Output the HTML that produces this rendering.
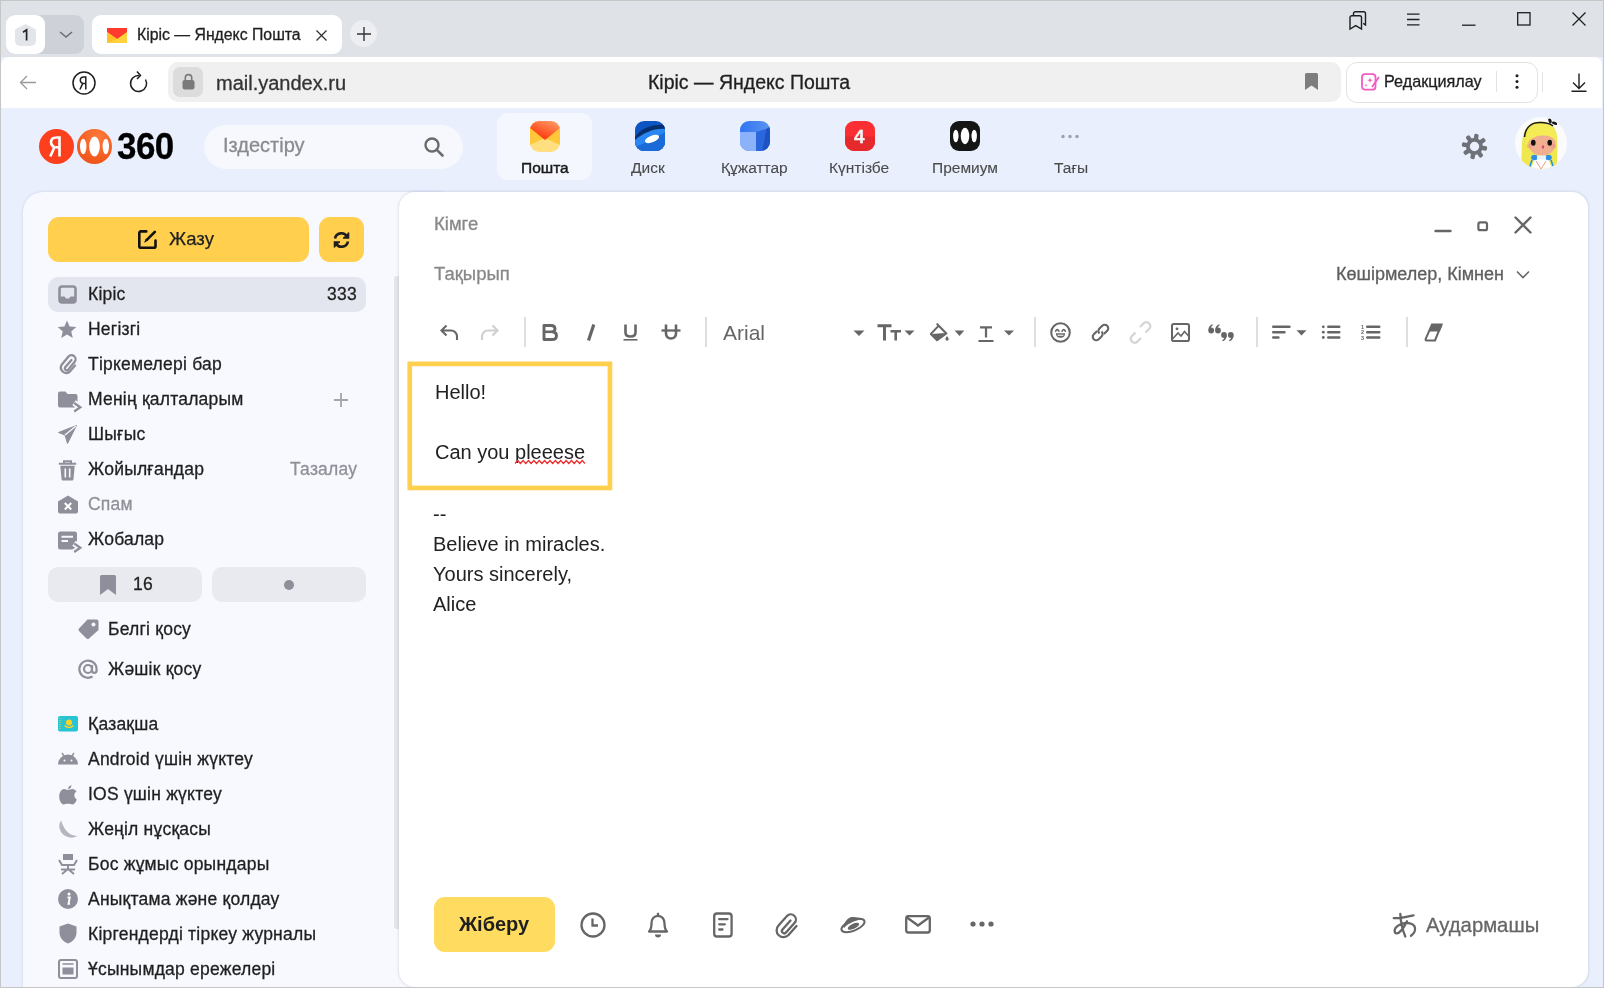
<!DOCTYPE html>
<html><head><meta charset="utf-8">
<style>
*{box-sizing:border-box;margin:0;padding:0}
html,body{width:1604px;height:988px;overflow:hidden;background:#e9effd;font-family:"Liberation Sans",sans-serif;color:#1f1f1f}
.a{position:absolute}
.t{position:absolute;white-space:pre;line-height:1;-webkit-text-stroke-width:0.3px}
svg{position:absolute;overflow:visible}
</style></head><body><div style="position:absolute;left:0;top:0;width:1604px;height:988px;will-change:transform">
<!-- browser chrome -->
<div class="a" style="left:0;top:0;width:1604px;height:57px;background:#dfe2e7"></div>
<div class="a" style="left:6px;top:15px;width:78px;height:39px;background:#ced2d8;border-radius:9px"></div>
<div class="a" style="left:6px;top:15px;width:39px;height:39px;background:#fff;border-radius:9px"></div>
<div class="a" style="left:15px;top:24px;width:21px;height:22px;background:#e2e5ea;border-radius:5px;clip-path:polygon(50% 0,100% 25%,100% 100%,0 100%,0 25%)"></div>
<svg style="left:22px;top:29px" width="8" height="12"><path d="M1 3.3L4.6 0.9V11.5" fill="none" stroke="#222" stroke-width="1.7"/></svg>
<svg style="left:59px;top:31px" width="14" height="8"><path d="M1 1L7 6L13 1" fill="none" stroke="#6b6f75" stroke-width="1.6"/></svg>
<div class="a" style="left:92px;top:15px;width:250px;height:39px;background:#fff;border-radius:9px"></div>
<svg style="left:107px;top:28px" width="20" height="15" viewBox="0 0 20 15"><rect x="0" y="0" width="20" height="15" fill="#ffd23d"/><path d="M0 0H20V4L10 11L0 4Z" fill="#ff3b30"/><path d="M0 4L10 11L0 15Z" fill="#ffc02a"/></svg>
<div class="t" style="left:137px;top:27px;font-size:15.8px;color:#1f1f1f">Кіріс — Яндекс Пошта</div>
<svg style="left:316px;top:30px" width="11" height="11"><path d="M0.5 0.5L10.5 10.5M10.5 0.5L0.5 10.5" stroke="#333" stroke-width="1.3"/></svg>
<div class="a" style="left:350px;top:20px;width:27px;height:27px;background:#eceef2;border-radius:50%"></div>
<svg style="left:357px;top:27px" width="14" height="14"><path d="M7 0V14M0 7H14" stroke="#333" stroke-width="1.4"/></svg>
<!-- window controls -->
<svg style="left:1349px;top:11px" width="18" height="19" viewBox="0 0 18 19"><path d="M4.5 5V2.5a1.8 1.8 0 0 1 1.8-1.8h8.4a1.8 1.8 0 0 1 1.8 1.8V14l-2.3-1.6" fill="none" stroke="#1f1f1f" stroke-width="1.4"/><path d="M1 6.5a1.8 1.8 0 0 1 1.8-1.8h7.9a1.8 1.8 0 0 1 1.8 1.8V18L6.7 14.6L1 18Z" fill="none" stroke="#1f1f1f" stroke-width="1.4"/></svg>
<svg style="left:1407px;top:13px" width="13" height="13"><path d="M0 1.2H12.5M0 6.5H12.5M0 11.8H12.5" stroke="#1f1f1f" stroke-width="1.3"/></svg>
<svg style="left:1462px;top:24px" width="14" height="3"><path d="M0 1.2H13.5" stroke="#1f1f1f" stroke-width="1.3"/></svg>
<svg style="left:1517px;top:12px" width="14" height="14"><rect x="0.7" y="0.7" width="12.3" height="12.3" fill="none" stroke="#1f1f1f" stroke-width="1.3"/></svg>
<svg style="left:1572px;top:12px" width="14" height="14"><path d="M0.5 0.5L13.5 13.5M13.5 0.5L0.5 13.5" stroke="#1f1f1f" stroke-width="1.3"/></svg>
<!-- toolbar -->
<div class="a" style="left:1px;top:57px;width:1601px;height:51px;background:#fff;border-radius:8px 8px 0 0"></div>
<svg style="left:19px;top:75px" width="18" height="15"><path d="M17 7.5H1.5M8 1L1.5 7.5L8 14" fill="none" stroke="#9a9a9a" stroke-width="1.3"/></svg>
<svg style="left:72px;top:71px" width="24" height="24" viewBox="0 0 24 24"><circle cx="12" cy="12" r="11" fill="none" stroke="#1f1f1f" stroke-width="1.5"/><path d="M13.8 18.5V6H11.8C9.6 6 8.3 7.3 8.3 9.2C8.3 10.8 9.2 11.8 10.8 12.4L7.9 18.5M13.8 12.4H11.4" fill="none" stroke="#1f1f1f" stroke-width="1.5"/></svg>
<svg style="left:129px;top:70px" width="20" height="24" viewBox="0 0 20 24"><path d="M16.5 9.5A8 8 0 1 1 10 5.5" fill="none" stroke="#1f1f1f" stroke-width="1.5"/><path d="M8 1.5L11.5 5.5L8 9" fill="none" stroke="#1f1f1f" stroke-width="1.5"/></svg>
<div class="a" style="left:168px;top:62px;width:1173px;height:40px;background:#f0f0f0;border-radius:10px"></div>
<div class="a" style="left:173px;top:67px;width:30px;height:30px;background:#dcdcdc;border-radius:7px"></div>
<svg style="left:182px;top:73px" width="13" height="17" viewBox="0 0 13 17"><path d="M3.3 7.5V4.8a3.2 3.2 0 0 1 6.4 0V7.5" fill="none" stroke="#7a7a7a" stroke-width="1.6"/><rect x="0.5" y="7" width="12" height="9.5" rx="2.2" fill="#7a7a7a"/></svg>
<div class="t" style="left:216px;top:73px;font-size:20px;color:#333">mail.yandex.ru</div>
<div class="t" style="left:648px;top:73px;font-size:19.5px;color:#1f1f1f">Кіріс — Яндекс Пошта</div>
<svg style="left:1305px;top:73px" width="13" height="17"><path d="M0 1.5A1.5 1.5 0 0 1 1.5 0H11.5A1.5 1.5 0 0 1 13 1.5V17L6.5 12.5L0 17Z" fill="#7d7d7d"/></svg>
<div class="a" style="left:1346px;top:62px;width:192px;height:41px;background:#fff;border:1px solid #e3e3e3;border-radius:11px"></div>
<svg style="left:1361px;top:73px" width="19" height="18" viewBox="0 0 19 18"><rect x="1" y="1.2" width="13.5" height="15.5" rx="3" fill="none" stroke="#f05cc0" stroke-width="1.8"/><path d="M9 4.5L9.7 6.6L11.8 7.3L9.7 8L9 10.1L8.3 8L6.2 7.3L8.3 6.6Z M5 10.5L5.4 11.8L6.7 12.2L5.4 12.6L5 13.9L4.6 12.6L3.3 12.2L4.6 11.8Z" fill="#f05cc0"/><path d="M11 14L18 4" stroke="#f05cc0" stroke-width="1.8"/></svg>
<div class="t" style="left:1384px;top:73px;font-size:16.2px;color:#1f1f1f">Редакциялау</div>
<div class="a" style="left:1496px;top:71px;width:1px;height:21px;background:#e3e3e3"></div>
<svg style="left:1515px;top:74px" width="4" height="15"><circle cx="2" cy="1.7" r="1.5" fill="#1f1f1f"/><circle cx="2" cy="7.5" r="1.5" fill="#1f1f1f"/><circle cx="2" cy="13.3" r="1.5" fill="#1f1f1f"/></svg>
<div class="a" style="left:1542px;top:72px;width:1px;height:20px;background:#e3e3e3"></div>
<svg style="left:1571px;top:73px" width="16" height="19"><path d="M8 0.5V15.5M2 9.5L8 15.5L14 9.5M0.5 18.3H15.5" fill="none" stroke="#1f1f1f" stroke-width="1.4"/></svg>
<!-- yandex header -->
<div class="a" style="left:39px;top:129px;width:35px;height:35px;border-radius:50%;background:#fc3f1d"></div>
<svg style="left:48px;top:136px" width="16" height="21" viewBox="0 0 16 21"><path d="M11.5 20.5V1.5H8.3C4.8 1.5 3 3.4 3 6.3C3 8.6 4.1 10 6.3 11.4L2.3 20.5M11.5 11.3H7.5" fill="none" stroke="#fff" stroke-width="2.6"/></svg>
<div class="a" style="left:77px;top:129px;width:35px;height:35px;border-radius:50%;background:radial-gradient(circle at 60% 25%,#ff7a3c,#f2581c 70%,#e04e17)"></div>
<svg style="left:77px;top:129px" width="35" height="35" viewBox="0 0 35 35"><ellipse cx="6.2" cy="17.5" rx="3.2" ry="7.8" fill="#fff"/><ellipse cx="17.5" cy="17.5" rx="5.3" ry="10" fill="#fff"/><ellipse cx="28.8" cy="17.5" rx="3.2" ry="7.8" fill="#fff"/></svg>
<div class="t" style="left:117px;top:129px;font-size:36px;font-weight:700;color:#000;transform:scaleX(0.97);transform-origin:0 0;letter-spacing:-0.5px">360</div>
<div class="a" style="left:204px;top:125px;width:259px;height:44px;background:#f6f8fe;border-radius:22px"></div>
<div class="t" style="left:223px;top:135px;font-size:20px;color:#8a8a8e">Іздестіру</div>
<svg style="left:424px;top:137px" width="20" height="20" viewBox="0 0 20 20"><circle cx="8" cy="8" r="6.5" fill="none" stroke="#6b6b6b" stroke-width="2.4"/><path d="M12.8 12.8L18.5 18.5" stroke="#6b6b6b" stroke-width="2.6" stroke-linecap="round"/></svg>
<div class="a" style="left:497px;top:113px;width:95px;height:67px;background:#f5f7fe;border-radius:11px"></div>
<svg style="left:530px;top:121px" width="30" height="31" viewBox="0 0 30 31"><defs><linearGradient id="pm" x1="0.3" y1="0.8" x2="0.8" y2="0"><stop offset="0" stop-color="#ff3d12"/><stop offset="1" stop-color="#ff9a62"/></linearGradient><clipPath id="pc"><rect x="0" y="0" width="30" height="31" rx="9"/></clipPath></defs><g clip-path="url(#pc)"><rect width="30" height="31" fill="#ffdf80"/><path d="M0 6L15 17L0 24Z M30 6L15 17L30 24Z" fill="#ffc83a"/><path d="M0 0H30V7L15 19L0 7Z" fill="url(#pm)"/></g></svg>
<div class="t" style="left:521px;top:160px;font-size:15.5px;color:#1a1a1a;-webkit-text-stroke-width:0.45px">Пошта</div>
<svg style="left:635px;top:121px" width="30" height="30" viewBox="0 0 30 30"><defs><clipPath id="dcp"><rect x="0" y="0" width="30" height="30" rx="9"/></clipPath></defs><g clip-path="url(#dcp)"><rect width="30" height="30" fill="#0d55c2"/><path d="M0 16C6 7 18 3 30 4V30H0Z" fill="#072f6e"/><path d="M0 19C8 12 20 7 30 8V30H0Z" fill="#2a86f2"/><path d="M0 30V26C10 22 22 16 30 11V30Z" fill="#1a6ad8"/><ellipse cx="17" cy="18" rx="7.5" ry="3.3" transform="rotate(-22 17 18)" fill="#fff"/></g></svg>
<div class="t" style="left:631px;top:160px;font-size:15.5px;color:#4a4a4a;-webkit-text-stroke-width:0.1px">Диск</div>
<svg style="left:740px;top:121px" width="30" height="30" viewBox="0 0 30 30"><defs><clipPath id="dcc"><rect x="0" y="0" width="30" height="30" rx="9"/></clipPath><linearGradient id="dcg" x1="0" y1="0" x2="1" y2="0"><stop offset="0" stop-color="#2f74f2"/><stop offset="1" stop-color="#5c93f0"/></linearGradient></defs><g clip-path="url(#dcc)"><rect width="30" height="30" fill="url(#dcg)"/><path d="M16 11L26 8L22 30H16Z" fill="#2a66dc"/><path d="M26 8L30 6V30H22Z" fill="#1d52c4"/><path d="M0 11H16V30H0Z" fill="#8cb2fb"/></g></svg>
<div class="t" style="left:721px;top:160px;font-size:15.5px;color:#4a4a4a;-webkit-text-stroke-width:0.1px">Құжаттар</div>
<svg style="left:845px;top:121px" width="30" height="30" viewBox="0 0 30 30"><defs><clipPath id="kc"><rect x="0" y="0" width="30" height="30" rx="9"/></clipPath></defs><g clip-path="url(#kc)"><rect width="30" height="30" fill="#fb2f33"/><rect x="0" y="15.5" width="30" height="15" fill="#e5292d"/></g></svg>
<div class="t" style="left:854px;top:127px;font-size:19px;font-weight:700;color:#f4f4f4">4</div>
<div class="t" style="left:829px;top:160px;font-size:15.5px;color:#4a4a4a;-webkit-text-stroke-width:0.1px">Күнтізбе</div>
<svg style="left:950px;top:121px" width="30" height="30" viewBox="0 0 30 30"><rect x="0" y="0" width="30" height="30" rx="9" fill="#151515"/><ellipse cx="5.8" cy="15" rx="2.7" ry="6.3" fill="#fff"/><ellipse cx="15" cy="15" rx="4.3" ry="8.3" fill="#fff"/><ellipse cx="24.2" cy="15" rx="2.7" ry="6.3" fill="#fff"/></svg>
<div class="t" style="left:932px;top:160px;font-size:15.5px;color:#4a4a4a;-webkit-text-stroke-width:0.1px">Премиум</div>
<svg style="left:1061px;top:134px" width="18" height="5"><circle cx="2" cy="2.5" r="1.7" fill="#9aa0ad"/><circle cx="9" cy="2.5" r="1.7" fill="#9aa0ad"/><circle cx="16" cy="2.5" r="1.7" fill="#9aa0ad"/></svg>
<div class="t" style="left:1054px;top:160px;font-size:15.5px;color:#4a4a4a;-webkit-text-stroke-width:0.1px">Тағы</div>
<svg style="left:1461px;top:133px" width="27" height="27" viewBox="0 0 27 27"><g fill="#6f7178"><rect x="11.3" y="0.8" width="4.4" height="6" rx="1.3" transform="rotate(10 13.5 13.5)"/><rect x="11.3" y="0.8" width="4.4" height="6" rx="1.3" transform="rotate(55 13.5 13.5)"/><rect x="11.3" y="0.8" width="4.4" height="6" rx="1.3" transform="rotate(100 13.5 13.5)"/><rect x="11.3" y="0.8" width="4.4" height="6" rx="1.3" transform="rotate(145 13.5 13.5)"/><rect x="11.3" y="0.8" width="4.4" height="6" rx="1.3" transform="rotate(190 13.5 13.5)"/><rect x="11.3" y="0.8" width="4.4" height="6" rx="1.3" transform="rotate(235 13.5 13.5)"/><rect x="11.3" y="0.8" width="4.4" height="6" rx="1.3" transform="rotate(280 13.5 13.5)"/><rect x="11.3" y="0.8" width="4.4" height="6" rx="1.3" transform="rotate(325 13.5 13.5)"/></g><circle cx="13.5" cy="13.5" r="6.6" fill="none" stroke="#6f7178" stroke-width="3.8"/></svg>
<svg style="left:1515px;top:117px" width="52" height="52" viewBox="0 0 52 52"><defs><clipPath id="avc"><circle cx="26" cy="26" r="26"/></clipPath></defs><g clip-path="url(#avc)"><rect width="52" height="52" fill="#fbfbfc"/><path d="M6 52C7 40 6 28 8 19C10 9 17 4.5 26 4.5C35 4.5 41 10 42 19C43 28 42 40 42 52Z" fill="#eee84e"/><ellipse cx="27" cy="27" rx="13.5" ry="11.5" fill="#f2ae90"/><path d="M11 28C11 12 18 6 27 6C36 6 41.5 12 41.5 24C38 20 33 18 27 18.5C20 19 14 22 11 28Z" fill="#f3ec55"/><path d="M9.5 20C10.5 9 18 5.5 25 5.5C31 5.5 35 6.5 38 9" fill="none" stroke="#1a1a1a" stroke-width="1.6"/><ellipse cx="35" cy="3.8" rx="1.6" ry="2.8" transform="rotate(-20 35 3.8)" fill="#1a1a1a"/><ellipse cx="39.5" cy="6.2" rx="2.8" ry="1.5" transform="rotate(20 39.5 6.2)" fill="#1a1a1a"/><circle cx="14.5" cy="29" r="2.5" fill="#f08888" opacity="0.45"/><circle cx="38.5" cy="29" r="2.5" fill="#f08888" opacity="0.45"/><ellipse cx="18.3" cy="25.7" rx="2.3" ry="3" fill="#111"/><ellipse cx="34.7" cy="25.7" rx="2.3" ry="3" fill="#111"/><ellipse cx="28" cy="30" rx="1.2" ry="1.8" fill="#e0407a"/><path d="M16 52L20 41H33L37 52Z" fill="#fff"/><path d="M21 44L26 52L31 44" fill="none" stroke="#f08060" stroke-width="0.8"/><ellipse cx="19.5" cy="40.5" rx="3.3" ry="2.8" fill="#2f8ee8"/><ellipse cx="33.5" cy="40.5" rx="3.3" ry="2.8" fill="#2f8ee8"/><rect x="22" y="38.5" width="9" height="4" rx="1" fill="#e8f2ff"/><path d="M17 43L14 52M36 43L39 52" stroke="#2f8ee8" stroke-width="1.6"/></g></svg>
<!-- sidebar -->
<div class="a" style="left:23px;top:192px;width:420px;height:800px;background:#f7f9fe;border-radius:20px 0 0 0;box-shadow:0 0 3px rgba(60,70,110,0.18)"></div>
<div class="a" style="left:394px;top:276px;width:8px;height:653px;background:#e3e5ea;border-radius:3px"></div>
<div class="a" style="left:48px;top:217px;width:261px;height:45px;background:#ffcf4d;border-radius:11px"></div>
<svg style="left:138px;top:230px" width="19" height="19" viewBox="0 0 19 19"><path d="M8.3 1.4H2.8A1.5 1.5 0 0 0 1.3 2.9V16.3A1.5 1.5 0 0 0 2.8 17.8H16A1.5 1.5 0 0 0 17.5 16.3V10.5" fill="none" stroke="#111" stroke-width="2.6" stroke-linecap="round"/><path d="M6 12.8L7.6 9.2L15.9 0.9A1.3 1.3 0 0 1 17.8 2.8L9.5 11.1Z" fill="#111"/></svg>
<div class="t" style="left:169px;top:230px;font-size:18.5px;color:#1f1f1f;-webkit-text-stroke:0.25px #1f1f1f">Жазу</div>
<div class="a" style="left:319px;top:217px;width:45px;height:45px;background:#ffcf4d;border-radius:11px"></div>
<svg style="left:332px;top:231px" width="19" height="18" viewBox="0 0 19 18"><path d="M3 7.5A6.5 6.5 0 0 1 15 5.5" fill="none" stroke="#1f1f1f" stroke-width="2.6"/><path d="M16.5 1.5V7H11" fill="#1f1f1f" stroke="#1f1f1f" stroke-width="1.6"/><path d="M16 10.5A6.5 6.5 0 0 1 4 12.5" fill="none" stroke="#1f1f1f" stroke-width="2.6"/><path d="M2.5 16.5V11H8" fill="#1f1f1f" stroke="#1f1f1f" stroke-width="1.6"/></svg>
<div class="a" style="left:48px;top:277px;width:318px;height:35px;background:#e3e6ee;border-radius:10px"></div>
<svg style="left:58px;top:285px" width="20" height="20" viewBox="0 0 20 20"><rect x="1.5" y="1.5" width="16" height="16" rx="2.5" fill="none" stroke="#8e8f9a" stroke-width="2.6"/><path d="M1.5 11.5H6.5L8 13.5H11L12.5 11.5H17.5V16A2 2 0 0 1 15.5 18H3.5A2 2 0 0 1 1.5 16Z" fill="#8e8f9a"/></svg>
<div class="t" style="left:88px;top:286px;font-size:17.5px;letter-spacing:0.22px">Кіріс</div>
<div class="t" style="left:327px;top:286px;font-size:17.5px;letter-spacing:0.22px">333</div>
<svg style="left:57px;top:320px" width="20" height="19" viewBox="0 0 20 19"><path d="M10 0.5L12.6 6.6L19.3 7.1L14.2 11.4L15.8 18L10 14.4L4.2 18L5.8 11.4L0.7 7.1L7.4 6.6Z" fill="#8e8f9a"/></svg>
<div class="t" style="left:88px;top:321px;font-size:17.5px;letter-spacing:0.22px">Негізгі</div>
<svg style="left:59px;top:354px" width="18" height="20" viewBox="0 0 18 20"><path d="M12.5 6L6 13.5A2 2 0 0 0 9 16L15.5 8A4 4 0 0 0 9.5 2.5L2.5 11A5.5 5.5 0 0 0 10.5 18L16 11.5" fill="none" stroke="#8e8f9a" stroke-width="2.3" stroke-linecap="round"/></svg>
<div class="t" style="left:88px;top:356px;font-size:17.5px;letter-spacing:0.22px">Тіркемелері бар</div>
<svg style="left:58px;top:391px" width="25" height="23" viewBox="0 0 25 23"><path d="M0 2.5A2 2 0 0 1 2 0.5H7.5L9.5 3H17.5A2 2 0 0 1 19.5 5V14.5A2 2 0 0 1 17.5 16.5H2A2 2 0 0 1 0 14.5Z" fill="#8e8f9a"/><path d="M16 11.8L22.5 16.2L16 20.7" fill="none" stroke="#f7f9fe" stroke-width="6" stroke-linejoin="round"/><path d="M16.2 12L22.3 16.2L16.2 20.5" fill="none" stroke="#8e8f9a" stroke-width="2.3"/></svg>
<div class="t" style="left:88px;top:391px;font-size:17.5px;letter-spacing:0.22px">Менің қалталарым</div>
<svg style="left:334px;top:393px" width="14" height="14"><path d="M7 0V14M0 7H14" stroke="#a3a4ad" stroke-width="1.8"/></svg>
<svg style="left:58px;top:425px" width="19" height="19" viewBox="0 0 19 19"><path d="M18.5 0.5L0.5 7.5L7 10L9.5 18.5L18.5 0.5Z" fill="#8e8f9a" stroke="#8e8f9a" stroke-width="1" stroke-linejoin="round"/><path d="M7 10L18 1" stroke="#f7f9fe" stroke-width="1.3"/></svg>
<div class="t" style="left:88px;top:426px;font-size:17.5px;letter-spacing:0.22px">Шығыс</div>
<svg style="left:58px;top:460px" width="19" height="21" viewBox="0 0 19 21"><path d="M0.8 3.8H18.2M6 3.8V1.2H13V3.8" fill="none" stroke="#8e8f9a" stroke-width="2"/><path d="M2.3 5.8H16.7L15.5 19A1.5 1.5 0 0 1 14 20.5H5A1.5 1.5 0 0 1 3.5 19Z" fill="#8e8f9a"/><path d="M7.3 8.5V17.5M11.7 8.5V17.5" stroke="#f7f9fe" stroke-width="1.6"/></svg>
<div class="t" style="left:88px;top:461px;font-size:17.5px;letter-spacing:0.22px">Жойылғандар</div>
<div class="t" style="left:290px;top:461px;font-size:17.5px;letter-spacing:0.22px;color:#8f9099">Тазалау</div>
<svg style="left:58px;top:495px" width="20" height="19" viewBox="0 0 20 19"><path d="M0 6.5L10 0.5L20 6.5V16.5A2 2 0 0 1 18 18.5H2A2 2 0 0 1 0 16.5Z" fill="#8e8f9a"/><path d="M6.8 8L13.2 14.5M13.2 8L6.8 14.5" stroke="#fff" stroke-width="2"/></svg>
<div class="t" style="left:88px;top:496px;font-size:17.5px;letter-spacing:0.22px;color:#8f9099">Спам</div>
<svg style="left:58px;top:531px" width="25" height="23" viewBox="0 0 25 23"><path d="M0 3A2.5 2.5 0 0 1 2.5 0.5H16.5A2.5 2.5 0 0 1 19 3V16A2.5 2.5 0 0 1 16.5 18.5H2.5A2.5 2.5 0 0 1 0 16Z" fill="#8e8f9a"/><path d="M3.5 5.8H15M3.5 10H10" stroke="#f7f9fe" stroke-width="2"/><path d="M16 12.3L22.5 16.7L16 21.2" fill="none" stroke="#f7f9fe" stroke-width="6" stroke-linejoin="round"/><path d="M16.2 12.5L22.3 16.7L16.2 21" fill="none" stroke="#8e8f9a" stroke-width="2.3"/></svg>
<div class="t" style="left:88px;top:531px;font-size:17.5px;letter-spacing:0.22px">Жобалар</div>
<div class="a" style="left:48px;top:567px;width:154px;height:35px;background:#e9eaef;border-radius:10px"></div>
<svg style="left:100px;top:575px" width="16" height="20"><path d="M0 1.5A1.5 1.5 0 0 1 1.5 0H14.5A1.5 1.5 0 0 1 16 1.5V20L8 14L0 20Z" fill="#8e8f9a"/></svg>
<div class="t" style="left:133px;top:576px;font-size:17.5px;letter-spacing:0.22px">16</div>
<div class="a" style="left:212px;top:567px;width:154px;height:35px;background:#e9eaef;border-radius:10px"></div>
<div class="a" style="left:284px;top:580px;width:10px;height:10px;border-radius:50%;background:#8e8f9a"></div>
<svg style="left:78px;top:619px" width="21" height="20" viewBox="0 0 21 20"><path d="M9.5 0.5H18.5A2 2 0 0 1 20.5 2.5V11L11 19.5A2 2 0 0 1 8.2 19.3L1 12A2 2 0 0 1 1.2 9.2Z" fill="#8e8f9a"/><circle cx="15.5" cy="5.5" r="2" fill="#f6f8fe"/></svg>
<div class="t" style="left:108px;top:621px;font-size:17.5px;letter-spacing:0.22px">Белгі қосу</div>
<svg style="left:78px;top:659px" width="20" height="20" viewBox="0 0 20 20"><circle cx="10" cy="10" r="4" fill="none" stroke="#8e8f9a" stroke-width="2.2"/><path d="M14 6V11.5A2.3 2.3 0 0 0 18.6 11.5V10A8.6 8.6 0 1 0 14.5 17.5" fill="none" stroke="#8e8f9a" stroke-width="2.2"/></svg>
<div class="t" style="left:108px;top:661px;font-size:17.5px;letter-spacing:0.22px">Жәшік қосу</div>
<svg style="left:58px;top:716px" width="20" height="16" viewBox="0 0 20 16"><rect x="0" y="0" width="20" height="15.5" rx="2" fill="#27c4d5"/><circle cx="11" cy="6.5" r="3" fill="#ffd21f"/><path d="M6.5 9.5Q11 13.5 15.5 9.5" fill="none" stroke="#ffd21f" stroke-width="1.5"/><path d="M2 2V13.5" stroke="#ffd21f" stroke-width="1" stroke-dasharray="1 1"/></svg>
<div class="t" style="left:88px;top:716px;font-size:17.5px;letter-spacing:0.22px">Қазақша</div>
<svg style="left:58px;top:751px" width="20" height="14" viewBox="0 0 20 14"><path d="M0 13.5A10 10 0 0 1 20 13.5Z" fill="#8e8f9a"/><path d="M4 2L6 5M16 2L14 5" stroke="#8e8f9a" stroke-width="1.4"/><circle cx="6.5" cy="9.5" r="1" fill="#f6f8fe"/><circle cx="13.5" cy="9.5" r="1" fill="#f6f8fe"/></svg>
<div class="t" style="left:88px;top:751px;font-size:17.5px;letter-spacing:0.22px">Android үшін жүктеу</div>
<svg style="left:59px;top:785px" width="18" height="20" viewBox="0 0 18 20"><path d="M9 5C10.5 5 11.5 4 13.5 4C15.5 4 17 5.5 17.5 6.5C15.5 7.8 15 9.5 15.5 11.5C16 13 17 14 17.8 14.5C17 16.5 15.5 19.5 13.5 19.5C12 19.5 11.5 18.8 9 18.8C6.5 18.8 6 19.5 4.5 19.5C2.5 19.5 0.2 15.5 0.2 11.5C0.2 7 3 4 5 4C6.5 4 7.5 5 9 5Z" fill="#8e8f9a"/><path d="M9 4C9 2 10.5 0.5 12.5 0.2C12.5 2.3 11 4 9 4Z" fill="#8e8f9a"/></svg>
<div class="t" style="left:88px;top:786px;font-size:17.5px;letter-spacing:0.22px">IOS үшін жүктеу</div>
<svg style="left:58px;top:820px" width="20" height="18" viewBox="0 0 20 18"><path d="M3 0.5C-1 6 2 16 12 17.5C15 18 18 17 19.5 16C14 16 7 13 3 0.5Z" fill="#b5b6bf"/></svg>
<div class="t" style="left:88px;top:821px;font-size:17.5px;letter-spacing:0.22px">Жеңіл нұсқасы</div>
<svg style="left:58px;top:853px" width="20" height="22" viewBox="0 0 20 22"><path d="M5 1H15V7H5Z" fill="#8e8f9a"/><path d="M1 7L4 12H16L19 7" fill="none" stroke="#8e8f9a" stroke-width="2"/><path d="M10 12V16M4 21L10 16L16 21M3 16.5H17" fill="none" stroke="#8e8f9a" stroke-width="2"/></svg>
<div class="t" style="left:88px;top:856px;font-size:17.5px;letter-spacing:0.22px">Бос жұмыс орындары</div>
<svg style="left:58px;top:889px" width="20" height="20" viewBox="0 0 20 20"><circle cx="10" cy="10" r="10" fill="#8e8f9a"/><circle cx="11" cy="5" r="1.5" fill="#fff"/><path d="M9.5 8.5H11.8L10.5 14.8H12" fill="none" stroke="#fff" stroke-width="1.9"/></svg>
<div class="t" style="left:88px;top:891px;font-size:17.5px;letter-spacing:0.22px">Анықтама және қолдау</div>
<svg style="left:59px;top:923px" width="18" height="21" viewBox="0 0 18 21"><path d="M9 0.5L17.5 3.5V9.5C17.5 15 13.5 19 9 20.5C4.5 19 0.5 15 0.5 9.5V3.5Z" fill="#8e8f9a"/></svg>
<div class="t" style="left:88px;top:926px;font-size:17.5px;letter-spacing:0.22px">Кіргендерді тіркеу журналы</div>
<svg style="left:58px;top:959px" width="20" height="20" viewBox="0 0 20 20"><rect x="1" y="1" width="18" height="18" rx="2" fill="none" stroke="#8e8f9a" stroke-width="2"/><rect x="4.5" y="8.5" width="11" height="7" fill="#8e8f9a"/><path d="M4.5 5H15.5" stroke="#8e8f9a" stroke-width="1.5"/></svg>
<div class="t" style="left:88px;top:961px;font-size:17.5px;letter-spacing:0.22px">Ұсынымдар ережелері</div>
<!-- compose -->
<div class="a" style="left:399px;top:192px;width:1189px;height:795px;background:#fff;border-radius:16px;box-shadow:0 0 3px rgba(60,70,110,0.25)"></div>
<div class="t" style="left:434px;top:215px;font-size:18.5px;color:#888">Кімге</div>
<div class="t" style="left:434px;top:265px;font-size:18.5px;color:#888">Тақырып</div>
<svg style="left:1435px;top:229px" width="16" height="4"><path d="M0.5 2H15.5" stroke="#666" stroke-width="2.4" stroke-linecap="round"/></svg>
<svg style="left:1477px;top:221px" width="12" height="11"><rect x="1.4" y="1.4" width="8.6" height="7.8" rx="1.8" fill="none" stroke="#666" stroke-width="2.2"/></svg>
<svg style="left:1514px;top:216px" width="18" height="18"><path d="M1.5 1.5L16.5 16.5M16.5 1.5L1.5 16.5" stroke="#666" stroke-width="2.4" stroke-linecap="round"/></svg>
<div class="t" style="left:1336px;top:265px;font-size:18px;color:#5f5f5f">Көшірмелер, Кімнен</div>
<svg style="left:1516px;top:270px" width="14" height="9"><path d="M1 1.5L7 7.5L13 1.5" fill="none" stroke="#666" stroke-width="1.6"/></svg>
<!-- format toolbar -->
<svg style="left:440px;top:324px" width="19" height="16" viewBox="0 0 19 16"><path d="M1.5 6.5H11A6 6 0 0 1 17 12.5V16" fill="none" stroke="#666" stroke-width="2.1"/><path d="M6.5 1.5L1.5 6.5L6.5 11.5" fill="none" stroke="#666" stroke-width="2.1"/></svg>
<svg style="left:480px;top:324px" width="19" height="16" viewBox="0 0 19 16"><path d="M17.5 6.5H8A6 6 0 0 0 2 12.5V16" fill="none" stroke="#cfcfcf" stroke-width="2.1"/><path d="M12.5 1.5L17.5 6.5L12.5 11.5" fill="none" stroke="#cfcfcf" stroke-width="2.1"/></svg>
<div class="a" style="left:524px;top:317px;width:2px;height:30px;background:#dedede"></div>
<svg style="left:542px;top:324px" width="17" height="17" viewBox="0 0 17 17"><path d="M2 1.5H9C11.5 1.5 13 2.8 13 4.8C13 6.5 12 7.5 10.5 7.8C12.5 8 14.5 9.3 14.5 11.7C14.5 14 12.8 15.5 10 15.5H2Z" fill="none" stroke="#666" stroke-width="2.9" stroke-linejoin="round"/><path d="M3 7.8H10" stroke="#666" stroke-width="2.6"/></svg>
<svg style="left:585px;top:324px" width="11" height="17"><path d="M8.8 0.5L3.5 16.5" stroke="#666" stroke-width="3.2"/></svg>
<svg style="left:623px;top:324px" width="15" height="17" viewBox="0 0 15 17"><path d="M2.5 0.5V8.5C2.5 11 4.5 12.5 7.5 12.5C10.5 12.5 12.5 11 12.5 8.5V0.5" fill="none" stroke="#666" stroke-width="2.6"/><path d="M0.5 15.8H14.5" stroke="#666" stroke-width="1.6"/></svg>
<svg style="left:661px;top:324px" width="20" height="17" viewBox="0 0 20 17"><path d="M5 0.5V9.5C5 12.5 7 14.5 10 14.5C13 14.5 15 12.5 15 9.5V0.5" fill="none" stroke="#666" stroke-width="2.6"/><path d="M0.5 6.5H19.5" stroke="#666" stroke-width="2.3"/></svg>
<div class="a" style="left:705px;top:317px;width:2px;height:30px;background:#dedede"></div>
<div class="t" style="left:723px;top:322px;font-size:21px;color:#666;-webkit-text-stroke-width:0">Arial</div>
<svg style="left:853px;top:330px" width="12" height="6"><path d="M0.5 0.5H11.5L6 6Z" fill="#666"/></svg>
<svg style="left:877px;top:324px" width="38" height="17" viewBox="0 0 38 17"><path d="M0.5 1.8H14.5M7.5 1.8V16.5" stroke="#666" stroke-width="3"/><path d="M13.5 7.3H24M18.7 7.3V16.5" stroke="#666" stroke-width="2.6"/><path d="M27.5 6.5H37.5L32.5 11.5Z" fill="#666"/></svg>
<svg style="left:929px;top:323px" width="36" height="19" viewBox="0 0 36 19"><path d="M8.3 1.2L17.3 10.4L8.1 17.2L1.9 10.9L8.8 3.6" fill="none" stroke="#666" stroke-width="2.1" stroke-linejoin="round" stroke-linecap="round"/><path d="M2.6 10.9L16.2 9.9L8.1 16.4Z" fill="#666"/><path d="M18 12.9C17.1 14.3 16.4 15.1 16.4 16A1.65 1.65 0 0 0 19.7 16C19.7 15.1 19 14.3 18 12.9Z" fill="#666"/><path d="M25.6 7.5H35.3L30.5 13.1Z" fill="#666"/></svg>
<svg style="left:978px;top:326px" width="37" height="16" viewBox="0 0 37 16"><path d="M2 1.3H14M8 1.3V11.5" stroke="#666" stroke-width="2.2"/><path d="M0.5 15H15.5" stroke="#666" stroke-width="2"/><path d="M26 4.5H36L31 9.5Z" fill="#666"/></svg>
<div class="a" style="left:1034px;top:317px;width:2px;height:30px;background:#dedede"></div>
<svg style="left:1050px;top:322px" width="21" height="21" viewBox="0 0 21 21"><circle cx="10.5" cy="10.5" r="9.3" fill="none" stroke="#666" stroke-width="2"/><path d="M5.7 9.2Q7.3 6 8.9 9.2M12.1 9.2Q13.7 6 15.3 9.2" fill="none" stroke="#666" stroke-width="1.6" stroke-linecap="round"/><path d="M5.8 11.3H15.2Q14.8 15.8 10.5 15.8Q6.2 15.8 5.8 11.3Z" fill="#666"/><path d="M7.6 13.2H13.4" stroke="#fff" stroke-width="1.1"/></svg>
<svg style="left:1090px;top:322px" width="21" height="21" viewBox="0 0 21 21"><g transform="rotate(-45 10.5 10.5)" fill="none" stroke="#666" stroke-width="2.1" stroke-linecap="butt"><path d="M9.2 7H4.5A3.5 3.5 0 0 0 4.5 14H8.5A3.5 3.5 0 0 0 12 10.5"/><path d="M11.8 14H16.5A3.5 3.5 0 0 0 16.5 7H12.5A3.5 3.5 0 0 0 9 10.5"/></g></svg>
<svg style="left:1128px;top:320px" width="25" height="25" viewBox="0 0 25 25"><path d="M12 7L15.5 3.5A3.5 3.5 0 0 1 21 3.5A3.5 3.5 0 0 1 21 9L17.5 12.5" fill="none" stroke="#d5d5d5" stroke-width="2.3"/><path d="M13 18L9.5 21.5A3.5 3.5 0 0 1 4 21.5A3.5 3.5 0 0 1 4 16L7.5 12.5" fill="none" stroke="#d5d5d5" stroke-width="2.3"/></svg>
<svg style="left:1171px;top:323px" width="19" height="19" viewBox="0 0 19 19"><rect x="1" y="1" width="17" height="17" rx="1.8" fill="none" stroke="#666" stroke-width="2"/><circle cx="6" cy="5.8" r="1.4" fill="#666"/><path d="M2 15.5L7 10L10 13L13.5 8.5L17.5 13" fill="none" stroke="#666" stroke-width="1.6"/></svg>
<svg style="left:1208px;top:324px" width="26" height="18" viewBox="0 0 26 18"><path d="M4 3A3 3 0 1 0 4.5 9C4.5 7.8 4.3 6.2 5.5 4" fill="none" stroke="#666" stroke-width="0"/><g fill="#666"><circle cx="3.2" cy="6.5" r="2.9"/><path d="M0.5 6C0.5 3 2 0.8 4.5 0.3L5 1.3C3.5 2 2.8 3.2 2.6 5Z"/><circle cx="10" cy="6.5" r="2.9"/><path d="M7.3 6C7.3 3 8.8 0.8 11.3 0.3L11.8 1.3C10.3 2 9.6 3.2 9.4 5Z"/><circle cx="16" cy="11" r="2.9"/><path d="M18.7 11.5C18.7 14.5 17.2 16.7 14.7 17.2L14.2 16.2C15.7 15.5 16.4 14.3 16.6 12.5Z"/><circle cx="22.8" cy="11" r="2.9"/><path d="M25.5 11.5C25.5 14.5 24 16.7 21.5 17.2L21 16.2C22.5 15.5 23.2 14.3 23.4 12.5Z"/></g></svg>
<div class="a" style="left:1256px;top:317px;width:2px;height:30px;background:#dedede"></div>
<svg style="left:1272px;top:325px" width="36" height="14" viewBox="0 0 36 14"><path d="M1.2 1.8H17.5M1.2 7.2H12.5M1.2 12.5H6.5" stroke="#666" stroke-width="2.4" stroke-linecap="round"/><path d="M24.5 5.2H34.5L29.5 10.6Z" fill="#666"/></svg>
<svg style="left:1321px;top:325px" width="20" height="14" viewBox="0 0 20 14"><circle cx="2.3" cy="1.8" r="1.4" fill="#666"/><circle cx="2.3" cy="7.2" r="1.4" fill="#666"/><circle cx="2.3" cy="12.5" r="1.4" fill="#666"/><path d="M7.2 1.8H18.3M7.2 7.2H18.3M7.2 12.5H18.3" stroke="#666" stroke-width="2.4" stroke-linecap="round"/></svg>
<svg style="left:1361px;top:324px" width="20" height="16" viewBox="0 0 20 16"><text x="0" y="5" font-size="5.5" font-family="Liberation Sans" font-weight="700" fill="#666">1</text><text x="0" y="10.3" font-size="5.5" font-family="Liberation Sans" font-weight="700" fill="#666">2</text><text x="0" y="15.6" font-size="5.5" font-family="Liberation Sans" font-weight="700" fill="#666">3</text><path d="M6.2 2.8H18.3M6.2 8.2H18.3M6.2 13.5H18.3" stroke="#666" stroke-width="2.4" stroke-linecap="round"/></svg>
<div class="a" style="left:1406px;top:317px;width:2px;height:30px;background:#dedede"></div>
<svg style="left:1424px;top:323px" width="19" height="19" viewBox="0 0 19 19"><path d="M8 1.5H17.5L11 17.5H2.5A1 1 0 0 1 1.6 16.2Z" fill="none" stroke="#666" stroke-width="2"/><path d="M8 1.5H17.5A1 1 0 0 1 18.2 2.8L15.7 8.5H5.5Z" fill="#666"/></svg>
<!-- body -->
<svg style="left:400px;top:355px" width="220" height="140"><rect x="9.75" y="8.85" width="200.2" height="124.1" fill="none" stroke="#ffcf4f" stroke-width="4.7"/></svg>
<div class="a" style="left:435px;top:377px;font-family:'Liberation Sans';font-size:20px;line-height:30px;color:#222;white-space:pre">Hello!

Can you pleeese</div>
<svg style="left:515px;top:459px" width="72" height="7" viewBox="0 0 72 7"><path d="M0 4.5 l2.69 -3 l2.69 3 l2.69 -3 l2.69 3 l2.69 -3 l2.69 3 l2.69 -3 l2.69 3 l2.69 -3 l2.69 3 l2.69 -3 l2.69 3 l2.69 -3 l2.69 3 l2.69 -3 l2.69 3 l2.69 -3 l2.69 3 l2.69 -3 l2.69 3 l2.69 -3 l2.69 3 l2.69 -3 l2.69 3 l2.69 -3 l2.69 3" fill="none" stroke="#ee2a2a" stroke-width="1.2"/></svg>
<div class="a" style="left:433px;top:499px;font-family:'Liberation Sans';font-size:20px;line-height:30px;color:#222;white-space:pre">--
Believe in miracles.
Yours sincerely,
Alice</div>
<!-- bottom bar -->
<div class="a" style="left:434px;top:897px;width:121px;height:55px;background:#ffdb5f;border-radius:11px"></div>
<div class="t" style="left:459px;top:914px;font-size:20px;font-weight:700;color:#1f1f1f;-webkit-text-stroke-width:0">Жіберу</div>
<svg style="left:580px;top:912px" width="26" height="26" viewBox="0 0 26 26"><circle cx="13" cy="13" r="11.5" fill="none" stroke="#666" stroke-width="2.3"/><path d="M12.5 6.5V13.5H18" fill="none" stroke="#666" stroke-width="2.3"/></svg>
<svg style="left:646px;top:912px" width="24" height="26" viewBox="0 0 24 26"><path d="M3 19.5H21C19 17.5 18.5 15 18.5 11.5C18.5 7 16 3.8 12 3.8C8 3.8 5.5 7 5.5 11.5C5.5 15 5 17.5 3 19.5Z" fill="none" stroke="#666" stroke-width="2.3" stroke-linejoin="round"/><path d="M12 0.8V3.8" stroke="#666" stroke-width="2.3"/><path d="M9 22.5A3 3 0 0 0 15 22.5Z" fill="#666"/></svg>
<svg style="left:712px;top:912px" width="22" height="26" viewBox="0 0 22 26"><rect x="2.2" y="1.5" width="17.4" height="23" rx="2.8" fill="none" stroke="#666" stroke-width="2.3"/><path d="M7.2 7.2H15.5M7.2 12.3H12.8M7.2 17.5H10.5" stroke="#666" stroke-width="2.3" stroke-linecap="round"/></svg>
<svg style="left:775px;top:912px" width="24" height="26" viewBox="0 0 24 26"><path d="M15.5 8.5L7.5 17.5A2.3 2.3 0 0 0 11 20.5L19.5 11A5 5 0 0 0 12 4L3.5 13.5A6.8 6.8 0 0 0 13.5 23L21.5 14" fill="none" stroke="#666" stroke-width="2.3" stroke-linecap="round"/></svg>
<svg style="left:839px;top:914px" width="28" height="20" viewBox="0 0 28 20"><ellipse cx="14" cy="11.5" rx="12.3" ry="5.2" transform="rotate(-22 14 11.5)" fill="none" stroke="#666" stroke-width="2"/><path d="M4 12.5C6 7 9 3.5 13 3C17 2.7 22 4 25 5.5C18 5.5 10 8.5 5 14Z" fill="#666"/><ellipse cx="14.5" cy="12.3" rx="6.2" ry="2.5" transform="rotate(-25 14.5 12.3)" fill="#666"/></svg>
<svg style="left:905px;top:915px" width="26" height="19" viewBox="0 0 26 19"><rect x="1.2" y="1.2" width="23.6" height="16.3" rx="2.2" fill="none" stroke="#666" stroke-width="2.3"/><path d="M2 2.5L13 10.5L24 2.5" fill="none" stroke="#666" stroke-width="2.3"/></svg>
<svg style="left:970px;top:921px" width="24" height="6"><circle cx="3" cy="3" r="2.6" fill="#666"/><circle cx="12" cy="3" r="2.6" fill="#666"/><circle cx="21" cy="3" r="2.6" fill="#666"/></svg>
<svg style="left:1393px;top:913px" width="24" height="25" viewBox="0 0 24 25"><path d="M0.8 5.2C7 5 14 4 20.5 2.3M7.3 1C7.6 8 9.2 16 12.3 23.5M14 8.2C11.5 13.5 7 20 3.8 20.3C1.5 20.5 1 17.5 2.5 15C5 11.3 12 9.3 17 10.3C21.3 11.2 22.8 14.5 21.8 18C21 20.5 19.5 21.8 18 22.8" fill="none" stroke="#666" stroke-width="2.3" stroke-linecap="round"/></svg>
<div class="t" style="left:1426px;top:914.5px;font-size:20.3px;color:#666">Аудармашы</div>
<!-- frame -->
<div class="a" style="left:0;top:0;width:1604px;height:1px;background:#c6c6c6"></div>
<div class="a" style="left:0;top:0;width:1px;height:988px;background:#c6c6c6"></div>
<div class="a" style="left:1603px;top:0;width:1px;height:988px;background:#c6c6c6"></div>
<div class="a" style="left:0;top:987px;width:1604px;height:1px;background:#c6c6c6"></div>
</div></body></html>
